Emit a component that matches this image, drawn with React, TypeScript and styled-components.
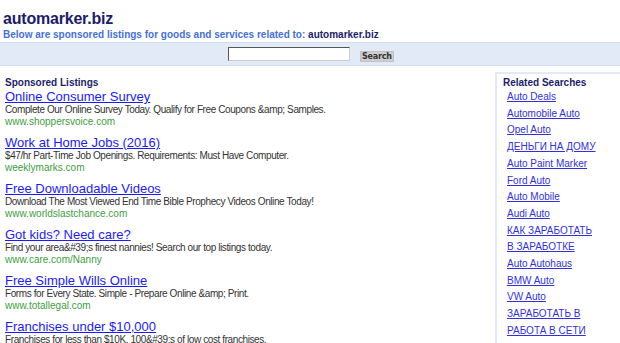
import React from 'react'
import styled, { createGlobalStyle } from 'styled-components'

const GlobalStyle = createGlobalStyle`
  html, body {
    margin: 0;
    padding: 0;
    background: #ffffff;
    font-family: Arial, "Liberation Sans", sans-serif;
  }
`

const Page = styled.div`
  width: 620px;
  overflow: hidden;
`

const Header = styled.div`
  padding: 10px 0 0 3px;
`

const SiteName = styled.div`
  font-size: 16px;
  font-weight: bold;
  color: #1c1c6b;
  line-height: 17px;
  letter-spacing: -0.2px;
`

const Tagline = styled.div`
  font-size: 10px;
  font-weight: bold;
  color: #4470d8;
  line-height: 14px;
  margin-top: 1px;

  b {
    color: #1c1c6b;
  }
`

const SearchBar = styled.div`
  height: 22px;
  background: #e3eaf7;
  border-top: 1px solid #d3ddf2;
  border-bottom: 1px solid #d3ddf2;
  display: flex;
  align-items: center;
  padding-left: 228px;
  gap: 10px;
`

const SearchInput = styled.input`
  width: 118px;
  height: 10px;
  border: 1px solid #555;
  border-right-color: #ccc;
  border-bottom-color: #ccc;
  background: #fff;
  padding: 1px;
  margin: 0;
  outline: none;
`

const SearchButton = styled.button`
  font-family: Verdana, "DejaVu Sans", sans-serif;
  font-size: 8px;
  font-weight: bold;
  line-height: 9px;
  color: #333;
  background: #cfcfcf;
  border: 1px solid #c2c2c2;
  padding: 0 1px;
  height: 11px;
  margin-top: 5px;
  letter-spacing: -0.2px;
`

const Body = styled.div`
  display: flex;
  justify-content: space-between;
  padding-top: 6px;
`

const Listings = styled.div`
  padding-left: 5px;
  padding-top: 5px;
`

const SectionTitle = styled.div<{ $gap?: number }>`
  font-size: 10px;
  font-weight: bold;
  color: #1c1c6b;
  line-height: 12px;
  margin-bottom: ${({ $gap = 0 }) => $gap}px;
`

const Listing = styled.div`
  margin-bottom: 8px;
`

const ListingTitle = styled.a`
  display: block;
  font-size: 13px;
  line-height: 15px;
  color: #1a1aff;
  text-decoration: underline;
`

const ListingText = styled.div`
  font-size: 10px;
  line-height: 12px;
  color: #333;
  letter-spacing: -0.4px;
  white-space: nowrap;
`

const ListingUrl = styled.div`
  font-size: 10px;
  line-height: 11px;
  color: #3e9e3e;
`

const Sidebar = styled.div`
  width: 121px;
  border: 2px solid #e3eaf7;
  border-right: none;
  padding: 3px 0 0 6px;
  margin-right: -4px;
  height: 400px;
`

const RelatedLink = styled.a`
  display: block;
  margin-left: 4px;
  font-size: 10px;
  line-height: 16.7px;
  color: #3030e0;
  text-decoration: underline;
  white-space: nowrap;
`

const listings = [
  {
    title: 'Online Consumer Survey',
    text: 'Complete Our Online Survey Today. Qualify for Free Coupons &amp; Samples.',
    url: 'www.shoppersvoice.com',
  },
  {
    title: 'Work at Home Jobs (2016)',
    text: '$47/hr Part-Time Job Openings. Requirements: Must Have Computer.',
    url: 'weeklymarks.com',
  },
  {
    title: 'Free Downloadable Videos',
    text: 'Download The Most Viewed End Time Bible Prophecy Videos Online Today!',
    url: 'www.worldslastchance.com',
  },
  {
    title: 'Got kids? Need care?',
    text: 'Find your area&#39;s finest nannies! Search our top listings today.',
    url: 'www.care.com/Nanny',
  },
  {
    title: 'Free Simple Wills Online',
    text: 'Forms for Every State. Simple - Prepare Online &amp; Print.',
    url: 'www.totallegal.com',
  },
  {
    title: 'Franchises under $10,000',
    text: 'Franchises for less than $10K. 100&#39;s of low cost franchises.',
    url: 'www.franchisegator.com',
  },
]

const related = [
  'Auto Deals',
  'Automobile Auto',
  'Opel Auto',
  'ДЕНЬГИ НА ДОМУ',
  'Auto Paint Marker',
  'Ford Auto',
  'Auto Mobile',
  'Audi Auto',
  'КАК ЗАРАБОТАТЬ',
  'В ЗАРАБОТКЕ',
  'Auto Autohaus',
  'BMW Auto',
  'VW Auto',
  'ЗАРАБОТАТЬ В',
  'РАБОТА В СЕТИ',
]

export default function App() {
  return (
    <Page>
      <GlobalStyle />
      <Header>
        <SiteName>automarker.biz</SiteName>
        <Tagline>
          Below are sponsored listings for goods and services related to: <b>automarker.biz</b>
        </Tagline>
      </Header>
      <SearchBar>
        <SearchInput type="text" />
        <SearchButton>Search</SearchButton>
      </SearchBar>
      <Body>
        <Listings>
          <SectionTitle>Sponsored Listings</SectionTitle>
          {listings.map((l) => (
            <Listing key={l.title}>
              <ListingTitle href="#">{l.title}</ListingTitle>
              <ListingText>{l.text}</ListingText>
              <ListingUrl>{l.url}</ListingUrl>
            </Listing>
          ))}
        </Listings>
        <Sidebar>
          <SectionTitle>Related Searches</SectionTitle>
          {related.map((r) => (
            <RelatedLink href="#" key={r}>
              {r}
            </RelatedLink>
          ))}
        </Sidebar>
      </Body>
    </Page>
  )
}
